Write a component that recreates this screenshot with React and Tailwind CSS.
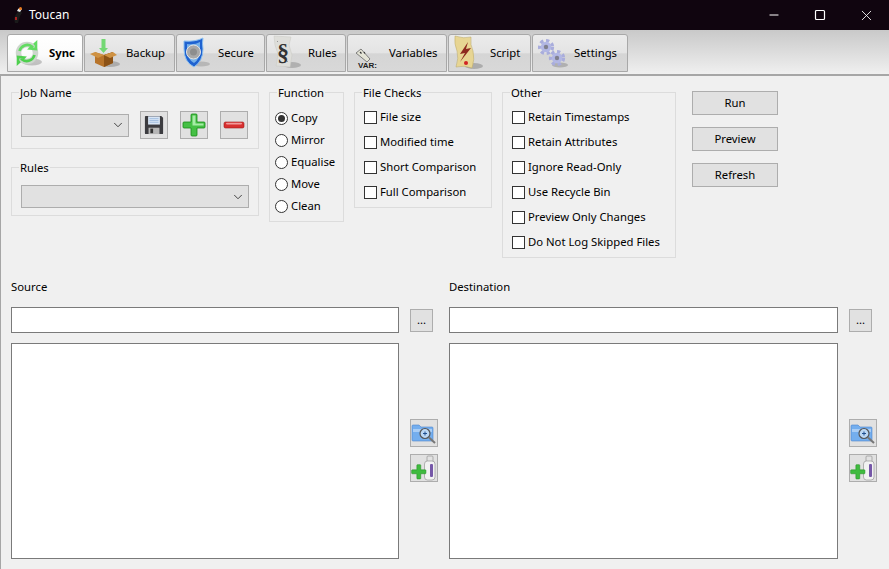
import { Minus, Square, X, ChevronDown } from "lucide-react";

const SyncIcon = () => (
  <svg width="30" height="32" viewBox="0 0 30 32">
    <ellipse cx="19" cy="25" rx="10" ry="3.500" fill="#000" opacity="0.2" />
    <circle cx="14" cy="16" r="8.500" fill="none" stroke="#cdd6cd" strokeWidth="5.500" />
    <path d="M6.500 14a8 8 0 0 1 12.500-4.500l-2 2 6 .5v-6l-2 1.800" fill="none" stroke="#62dc62" strokeWidth="2.600" />
    <path d="M21.500 18a8 8 0 0 1-12.500 4.500l2-2-6-.5v6l2-1.800" fill="none" stroke="#4ed04e" strokeWidth="2.600" />
  </svg>
);

const BackupIcon = () => (
  <svg width="30" height="32" viewBox="0 0 30 32">
    <ellipse cx="20" cy="27" rx="10" ry="3" fill="#000" opacity="0.2" />
    <path d="M11.500 2h4v9h2.500l-4.500 5-4.500-5h2.500z" fill="#74d874" />
    <path d="M5 15l9 3 9-3v11l-9 4-9-4z" fill="#b8742a" />
    <path d="M14 18l9-3v11l-9 4z" fill="#8c5216" />
    <path d="M5 15l-5 2 8 4 6-3zM23 15l4 3-7 3-6-3z" fill="#cf9243" />
  </svg>
);

const SecureIcon = () => (
  <svg width="30" height="34" viewBox="0 0 30 34">
    <ellipse cx="19" cy="28" rx="9" ry="2.500" fill="#000" opacity="0.15" />
    <path d="M2 5q11 1 19-3q-1 5 0 11q0 12-9 18q-10-5-10-18z" fill="#1f62d0" stroke="#8cc0f0" strokeWidth="1" />
    <path d="M5 8q8 1 13-2v8q0 9-6 13q-7-4-7-13z" fill="#74b0ea" />
    <circle cx="11.500" cy="16" r="7" fill="#a8a8a8" stroke="#e4e4e4" />
    <circle cx="11.500" cy="16" r="3.500" fill="#8d8d8d" />
  </svg>
);

const RulesIcon = () => (
  <svg width="30" height="36" viewBox="0 0 30 36">
    <ellipse cx="20" cy="30" rx="9" ry="3" fill="#000" opacity="0.18" />
    <path d="M2 1l17 1-2 8 3 10-2 12-14-1 2-12-3-9z" fill="#dededa" stroke="#c8c8c2" strokeWidth="0.5" />
    <path d="M5 6l1 1M7 25l1 1M15 26l1 1" stroke="#999" strokeWidth="1" />
    <text x="5" y="25" fontFamily="'Liberation Serif', serif" fontSize="24" fontWeight="700" fill="#333">§</text>
  </svg>
);

const VariablesIcon = () => (
  <svg width="30" height="32" viewBox="0 0 30 32">
    <path d="M3 16l5-4 9 10-3 3z" fill="#e4e4d6" stroke="#666" strokeWidth="0.8" />
    <path d="M7 15l1.500 1.500M11 15l1 1.500" stroke="#333" strokeWidth="1.200" />
    <text x="5" y="31" fontFamily="'Liberation Sans', sans-serif" fontSize="8" fontWeight="700" fill="#222">VAR:</text>
  </svg>
);

const ScriptIcon = () => (
  <svg width="30" height="36" viewBox="0 0 30 36">
    <ellipse cx="20" cy="31" rx="9" ry="3" fill="#000" opacity="0.2" />
    <path d="M1 1q9 3 16 1q-1 8 2 14q2 8-1 17q-8-3-16-1q3-9 1-16q-3-7-2-15z" fill="#e7d593" stroke="#b9a763" strokeWidth="0.5" />
    <path d="M14 7l-8 12 5-1-5 9 11-14-5 1z" fill="#8e2a20" />
    <circle cx="12" cy="28" r="2" fill="#d02323" />
  </svg>
);

const Gear = ({ cx, cy, r }) => (
  <g>
    <circle cx={cx} cy={cy} r={r} fill="none" stroke="#a9addc" strokeWidth={r * 0.5} strokeDasharray={`${r * 0.5} ${r * 0.42}`} />
    <circle cx={cx} cy={cy} r={r * 0.8} fill="#b2b7e4" />
    <circle cx={cx} cy={cy} r={r * 0.34} fill="#80808e" />
  </g>
);

const SettingsIcon = () => (
  <svg width="30" height="32" viewBox="0 0 30 32">
    <ellipse cx="22" cy="28" rx="8" ry="2.500" fill="#000" opacity="0.18" />
    <Gear cx={8} cy={10} r={6.500} />
    <Gear cx={19} cy={21} r={6.500} />
  </svg>
);

const tabs = [
  { label: "Sync", w: "w-[76px]", icon: <SyncIcon />, active: true },
  { label: "Backup", w: "w-[91px]", icon: <BackupIcon /> },
  { label: "Secure", w: "w-[89px]", icon: <SecureIcon /> },
  { label: "Rules", w: "w-[80px]", icon: <RulesIcon /> },
  { label: "Variables", w: "w-[100px]", icon: <VariablesIcon /> },
  { label: "Script", w: "w-[83px]", icon: <ScriptIcon /> },
  { label: "Settings", w: "w-[96px]", icon: <SettingsIcon /> },
];

const Tab = ({ label, w, icon, active }) => (
  <div className={`${w} h-[38px] flex items-center gap-[6px] pl-[5px] border border-[#a8a8a8] rounded-t-[3px] ${active ? "bg-[linear-gradient(#ffffff,#fbfbfb_55%,#e9e9e9)] font-bold" : "bg-[linear-gradient(#ebebeb,#e4e4e4_50%,#d5d5d5_52%,#d8d8d8)]"}`}>
    <div className="w-[30px] h-[32px] shrink-0 flex items-center justify-center">{icon}</div>
    <span>{label}</span>
  </div>
);

const Group = ({ title, className, children }) => (
  <div className={`relative border border-[#dcdcdc] ${className}`}>
    <span className="absolute left-[7px] top-[-8px] bg-[#f0f0f0] px-[1px] leading-[16px]">{title}</span>
    {children}
  </div>
);

const Select = ({ className }) => (
  <div className={`h-[23px] bg-[#e1e1e1] border border-[#adadad] flex items-center justify-end pr-[3px] ${className}`}>
    <ChevronDown size={14} strokeWidth={1.4} className="text-[#222]" />
  </div>
);

const ImgButton = ({ children }) => (
  <button className="w-[28px] h-[28px] bg-[#e1e1e1] border border-[#adadad] flex items-center justify-center">{children}</button>
);

const Radio = ({ label, checked }) => (
  <div className="h-[22px] flex items-center gap-[3px]">
    <span className="w-[13px] h-[13px] rounded-full bg-white border border-[#333] flex items-center justify-center">
      {checked && <span className="w-[7px] h-[7px] rounded-full bg-[#333]" />}
    </span>
    <span>{label}</span>
  </div>
);

const Check = ({ label }) => (
  <div className="h-[25px] flex items-center gap-[3px]">
    <span className="w-[13px] h-[13px] bg-white border border-[#333]" />
    <span>{label}</span>
  </div>
);

const PushButton = ({ label }) => (
  <button className="w-[86px] h-[24px] bg-[#e1e1e1] border border-[#adadad]">{label}</button>
);

const FloppyIcon = () => (
  <svg width="20" height="20" viewBox="0 0 22 22">
    <path d="M1 2q0-1 1-1h17l2 2v17q0 1-1 1H2q-1 0-1-1z" fill="#3c3c40" />
    <rect x="4.500" y="1.500" width="13" height="9" fill="#d9e6f6" />
    <path d="M6 4h10M6 6h10M6 8h10" stroke="#8fb0d8" strokeWidth="0.8" />
    <rect x="5" y="14" width="12" height="7" fill="#b6b6b6" />
    <rect x="7" y="15" width="3" height="5" fill="#333" />
  </svg>
);

const PlusIcon = () => (
  <svg width="24" height="24" viewBox="0 0 24 24">
    <path d="M9 2q0-1 1-1h4q1 0 1 1v7h7q1 0 1 1v4q0 1-1 1h-7v7q0 1-1 1h-4q-1 0-1-1v-7H2q-1 0-1-1v-4q0-1 1-1h7z" fill="#45c045" stroke="#178c17" strokeWidth="0.8" />
    <path d="M10.500 2.500h3v8h8v2h-11z" fill="#a6eba6" />
  </svg>
);

const MinusIcon = () => (
  <svg width="22" height="8" viewBox="0 0 22 8">
    <rect x="1" y="1" width="20" height="6" rx="1.500" fill="#d93030" stroke="#a01818" strokeWidth="0.6" />
    <rect x="3" y="1.800" width="16" height="1.600" rx="0.800" fill="#f29a9a" />
  </svg>
);

const FolderIcon = () => (
  <svg width="26" height="24" viewBox="0 0 26 24">
    <path d="M1 5q0-1 1-1h6l2 2h11q1 0 1 1v12q0 1-1 1H2q-1 0-1-1z" fill="#74aeee" stroke="#4a84cc" strokeWidth="0.6" />
    <rect x="2" y="8" width="19" height="3" fill="#a9cdf5" />
    <circle cx="14" cy="12.500" r="5" fill="#bcd8f5" stroke="#555" strokeWidth="1.200" />
    <path d="M12 12.500h4M14 10.500v4" stroke="#1f4f8f" strokeWidth="1" />
    <path d="M18 16.500l6 5.500" stroke="#777" strokeWidth="2" />
  </svg>
);

const UsbIcon = () => (
  <svg width="26" height="26" viewBox="0 0 26 26">
    <rect x="16" y="1" width="6" height="6" rx="1" fill="#e2e2e2" stroke="#888" strokeWidth="0.6" />
    <rect x="13.500" y="6" width="10.500" height="19" rx="3" fill="#f2f2f2" stroke="#8a8a8a" strokeWidth="0.6" />
    <rect x="19" y="9" width="3" height="13" rx="1" fill="#7658a8" />
    <g transform="translate(0 9) scale(0.65)">
      <path d="M9 2q0-1 1-1h4q1 0 1 1v7h7q1 0 1 1v4q0 1-1 1h-7v7q0 1-1 1h-4q-1 0-1-1v-7H2q-1 0-1-1v-4q0-1 1-1h7z" fill="#3fbb3f" stroke="#1f8f1f" strokeWidth="0.8" />
    </g>
  </svg>
);

const PathColumn = ({ label, className, fieldWidth }) => (
  <div className={`flex flex-col ${className}`}>
    <div className="h-[16px] leading-[16px]">{label}</div>
    <div className="mt-[12px] flex items-center gap-[11px]">
      <div className={`h-[26px] bg-white border border-[#7a7a7a] ${fieldWidth}`} />
      <button className="w-[23px] h-[23px] bg-[#e1e1e1] border border-[#adadad] leading-[14px]">...</button>
    </div>
    <div className="mt-[10px] flex gap-[11px]">
      <div className={`h-[216px] bg-white border border-[#7a7a7a] ${fieldWidth}`} />
      <div className="pt-[76px] flex flex-col gap-[7px]">
        <ImgButton><FolderIcon /></ImgButton>
        <ImgButton><UsbIcon /></ImgButton>
      </div>
    </div>
  </div>
);

export default function App() {
  return (
    <div className="w-[889px] h-[569px] overflow-hidden flex flex-col bg-[#f0f0f0] text-[11.3px] text-black font-['Noto_Sans','Open_Sans',sans-serif]">
      <div className="h-[30px] shrink-0 bg-[#10050f] text-white text-[12px] flex items-center">
        <svg width="14" height="18" viewBox="0 0 14 18" className="ml-[11px]">
          <path d="M4 17q-2-6 2-10l3-3 2 3-2 3-2 7z" fill="#1a1a1a" />
          <path d="M6 5q1-3 3-3l2 1-2 3z" fill="#e8e8e8" />
          <circle cx="9.500" cy="2.500" r="1.500" fill="#e8791d" />
          <rect x="4" y="11" width="2" height="3" fill="#a22" />
        </svg>
        <span className="ml-[4px]">Toucan</span>
        <div className="ml-auto flex items-center h-full">
          <div className="w-[46px] flex justify-center"><Minus size={14} strokeWidth={1} absoluteStrokeWidth /></div>
          <div className="w-[46px] flex justify-center"><Square size={12} strokeWidth={1.200} absoluteStrokeWidth /></div>
          <div className="w-[46px] flex justify-center"><X size={17} strokeWidth={1.200} /></div>
        </div>
      </div>

      <div className="h-[46px] shrink-0 bg-gradient-to-b from-[#c9c9c9] to-[#f0f0f0] border-b-2 border-[#a6a6a6] pl-[7px] pt-[4px] flex items-start gap-[1px]">
        {tabs.map((t) => <Tab key={t.label} {...t} />)}
      </div>

      <div className="flex-1 border-l border-[#a6a6a6] pl-[10px]">
        <div className="pt-[16px] flex items-start gap-[10px] h-[183px]">
          <div className="w-[248px] flex flex-col gap-[18px]">
            <Group title="Job Name" className="h-[57px] pl-[9px] pt-[18px]">
              <div className="flex items-center">
                <Select className="w-[108px]" />
                <div className="ml-[11px] flex gap-[12px]">
                  <ImgButton><FloppyIcon /></ImgButton>
                  <ImgButton><PlusIcon /></ImgButton>
                  <ImgButton><MinusIcon /></ImgButton>
                </div>
              </div>
            </Group>
            <Group title="Rules" className="h-[49px] px-[9px] pt-[17px]">
              <Select className="w-full" />
            </Group>
          </div>
          <Group title="Function" className="w-[75px] h-[130px] pl-[5px] pt-[14px]">
            <Radio label="Copy" checked />
            <Radio label="Mirror" />
            <Radio label="Equalise" />
            <Radio label="Move" />
            <Radio label="Clean" />
          </Group>
          <Group title="File Checks" className="w-[138px] h-[116px] pl-[9px] pt-[12px]">
            <Check label="File size" />
            <Check label="Modified time" />
            <Check label="Short Comparison" />
            <Check label="Full Comparison" />
          </Group>
          <Group title="Other" className="w-[174px] h-[166px] pl-[9px] pt-[12px]">
            <Check label="Retain Timestamps" />
            <Check label="Retain Attributes" />
            <Check label="Ignore Read-Only" />
            <Check label="Use Recycle Bin" />
            <Check label="Preview Only Changes" />
            <Check label="Do Not Log Skipped Files" />
          </Group>
          <div className="ml-[6px] mt-[-1px] flex flex-col gap-[12px]">
            <PushButton label="Run" />
            <PushButton label="Preview" />
            <PushButton label="Refresh" />
          </div>
        </div>

        <div className="pt-[20px] flex gap-[11px]">
          <PathColumn label="Source" className="w-[427px]" fieldWidth="w-[388px]" />
          <PathColumn label="Destination" className="w-[428px]" fieldWidth="w-[389px]" />
        </div>
      </div>
    </div>
  );
}
